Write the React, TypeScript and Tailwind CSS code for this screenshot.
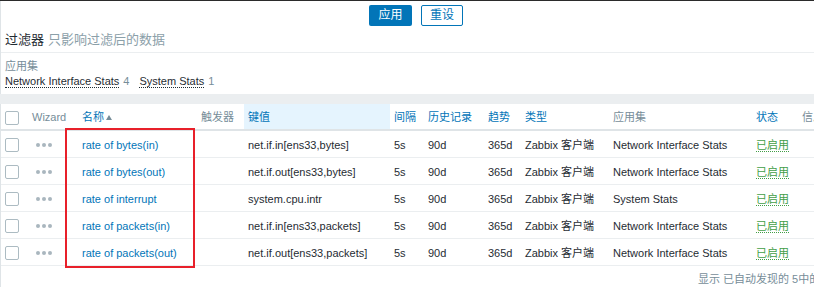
import React from "react";

const FONT = { fontFamily: '"Liberation Sans", Arial, "Noto Sans CJK SC", sans-serif' };

type Row = { name: string; key: string; app: string };
const rows: Row[] = [
  { name: "rate of bytes(in)", key: "net.if.in[ens33,bytes]", app: "Network Interface Stats" },
  { name: "rate of bytes(out)", key: "net.if.out[ens33,bytes]", app: "Network Interface Stats" },
  { name: "rate of interrupt", key: "system.cpu.intr", app: "System Stats" },
  { name: "rate of packets(in)", key: "net.if.in[ens33,packets]", app: "Network Interface Stats" },
  { name: "rate of packets(out)", key: "net.if.out[ens33,packets]", app: "Network Interface Stats" },
];

const cols = "grid grid-cols-[27px_50px_119px_47px_146px_34px_60px_37px_88px_143px_46px_60px]";

function Checkbox() {
  return <div className="w-[14px] h-[14px] border border-[#acbbc2] rounded-[2px] bg-white" />;
}

function Dots() {
  return (
    <div className="flex gap-[2px] items-center">
      <span className="w-[4px] h-[4px] rounded-full bg-[#a9b6be]" />
      <span className="w-[4px] h-[4px] rounded-full bg-[#a9b6be]" />
      <span className="w-[4px] h-[4px] rounded-full bg-[#a9b6be]" />
    </div>
  );
}

export default function App() {
  return (
    <div className="relative w-[814px] h-[287px] overflow-hidden bg-white text-[11px] text-[#1f2c33]" style={FONT}>
      <div className="h-[1px] bg-[#2b2b2b]" />
      <div className="border-l border-[#dfe4e7]">
        {/* buttons */}
        <div className="flex pt-[4px] pl-[368px] gap-[9px]">
          <button className="w-[43px] h-[21px] bg-[#0275b8] text-white text-[12px] leading-[21px] rounded-[2px]">应用</button>
          <button className="w-[42px] h-[21px] border border-[#0275b8] text-[#0275b8] text-[12px] leading-[19px] rounded-[2px] bg-white">重设</button>
        </div>
        {/* heading */}
        <div className="h-[26px] pt-[7px] pl-[4px] text-[13px] leading-[14px] whitespace-nowrap">
          <span className="text-[#1f2c33]">过滤器</span>
          <span className="text-[#8ba0a9] ml-[4px]">只影响过滤后的数据</span>
        </div>
        <div className="h-[1px] bg-[#ebeef0]" />
        {/* application set */}
        <div className="h-[41px] pl-[4px] pt-[7px]">
          <div className="text-[#768d99] leading-[13px]">应用集</div>
          <div className="flex gap-[10px] mt-[2px] leading-[13px] whitespace-nowrap">
            <span>
              <span className="border-b border-dotted border-[#1f2c33]">Network Interface Stats</span>
              <span className="text-[#768d99] ml-[4px]">4</span>
            </span>
            <span>
              <span className="border-b border-dotted border-[#1f2c33]">System Stats</span>
              <span className="text-[#768d99] ml-[4px]">1</span>
            </span>
          </div>
        </div>
      </div>
      <div className="h-[10px] bg-[#ebeef0]" />
      <div className="border-l border-[#dfe4e7]">
        {/* header */}
        <div className={`${cols} h-[27px] pt-[2px] border-b-2 border-[#dfe4e7] items-center whitespace-nowrap`}>
          <div className="pl-[4px]"><Checkbox /></div>
          <div className="pl-[4px] text-[#768d99]">Wizard</div>
          <div className="pl-[4px] text-[#0275b8] flex items-center">
            名称
            <span className="ml-[2px] w-0 h-0 border-l-[3px] border-r-[3px] border-b-[5px] border-l-transparent border-r-transparent border-b-[#768d99]" />
          </div>
          <div className="pl-[4px] text-[#768d99]">触发器</div>
          <div className="pl-[4px] -mt-[2px] pt-[2px] self-stretch text-[#0275b8] bg-[#e5f4fe] flex items-center">键值</div>
          <div className="pl-[4px] text-[#0275b8]">间隔</div>
          <div className="pl-[4px] text-[#0275b8]">历史记录</div>
          <div className="pl-[4px] text-[#0275b8]">趋势</div>
          <div className="pl-[4px] text-[#0275b8]">类型</div>
          <div className="pl-[4px] text-[#768d99]">应用集</div>
          <div className="pl-[4px] text-[#0275b8]">状态</div>
          <div className="pl-[4px] text-[#768d99]">信息</div>
        </div>
        {rows.map((r) => (
          <div key={r.name} className={`${cols} h-[27px] pt-[2px] border-b border-[#ebeef0] items-center whitespace-nowrap`}>
            <div className="pl-[4px]"><Checkbox /></div>
            <div className="pl-[8px]"><Dots /></div>
            <div className="pl-[4px] text-[#0275b8]">{r.name}</div>
            <div />
            <div className="pl-[4px]">{r.key}</div>
            <div className="pl-[4px]">5s</div>
            <div className="pl-[4px]">90d</div>
            <div className="pl-[4px]">365d</div>
            <div className="pl-[4px]">Zabbix 客户端</div>
            <div className="pl-[4px]">{r.app}</div>
            <div className="pl-[4px]">
              <span className="text-[#429e47] border-b border-dotted border-[#429e47]">已启用</span>
            </div>
            <div />
          </div>
        ))}
        <div className="h-[22px] pl-[697px] pt-[7px] leading-[13px] text-[#768d99] whitespace-nowrap">
          显示 已自动发现的 5中的 5
        </div>
      </div>
      {/* red annotation box */}
      <div className="absolute left-[65px] top-[128px] w-[130px] h-[140px] border-2 border-[#e8202a]" />
    </div>
  );
}
